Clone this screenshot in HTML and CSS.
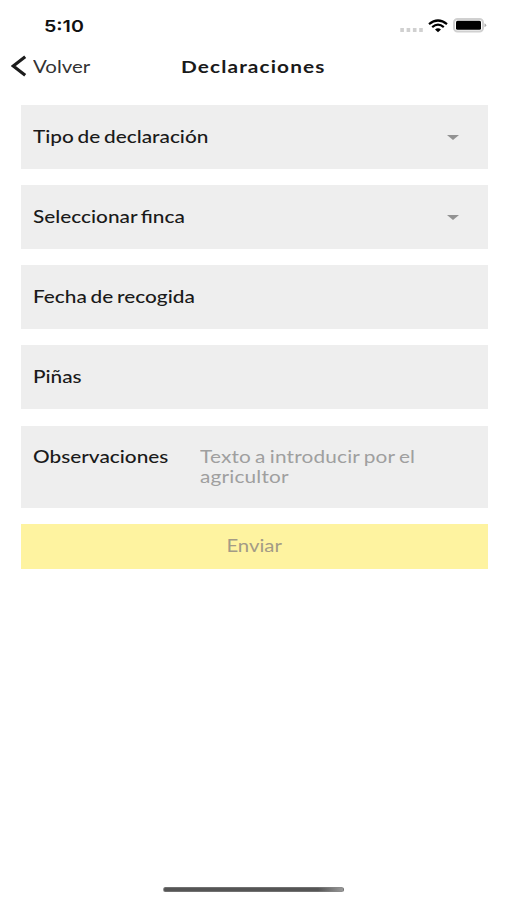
FILE: index.html
```
<!DOCTYPE html>
<html lang="es">
<head>
<meta charset="utf-8">
<title>Declaraciones</title>
<link rel="stylesheet" href="styles.css">
</head>
<body>
<header class="status">
  <span class="wide time">5:10</span>
  <div class="indicators">
    <svg class="signal" width="24" height="4" viewBox="0 0 24 4"><path d="M0.3 0h3.6v4h-3.6zM6.6 0h3.6v4h-3.6zM12.9 0h3.6v4h-3.6zM19.2 0h3.6v4h-3.6z" fill="#d0d0d0"/></svg>
    <svg class="wifi" width="20" height="14" viewBox="0 0 20 14"><g fill="none" stroke="#000" stroke-width="2.2"><path d="M1 5.2Q10-2.2 19 5.2"/><path d="M4.2 8.2Q10 3.2 15.8 8.2"/></g><path d="M7 10.6Q10 8 13 10.6L10 13.2z"/></svg>
    <svg class="battery" width="34" height="15" viewBox="0 0 34 15"><rect x="1" y="1" width="29" height="12.5" rx="3.5" fill="#fff" stroke="#d0d0d0" stroke-width="2"/><rect x="3" y="2.8" width="25" height="9" rx="1.5"/><path d="M31.5 5.2Q35 7.2 31.5 9.2z" fill="#aaa"/></svg>
  </div>
</header>
<nav class="nav">
  <a class="back"><svg width="16" height="22" viewBox="0 0 16 22"><path d="M14.2 1.8L2.2 11l12 9.2" fill="none" stroke="#1c1c1c" stroke-width="3.2"/></svg><span class="wide back-label">Volver</span></a>
  <h1 class="wide title">Declaraciones</h1>
</nav>
<main class="form">
  <div class="field"><span class="wide label">Tipo de declaración</span><i class="caret"></i></div>
  <div class="field"><span class="wide label">Seleccionar finca</span><i class="caret"></i></div>
  <div class="field"><span class="wide label">Fecha de recogida</span></div>
  <div class="field"><span class="wide label">Piñas</span></div>
  <div class="field notes"><span class="wide label">Observaciones</span><span class="wide hint">Texto a introducir por el<br>agricultor</span></div>
  <button class="send"><span class="wide send-label">Enviar</span></button>
</main>
<div class="home"></div>
</body>
</html>
```
FILE: styles.css
```
* { box-sizing: border-box; }
body {
  margin: 0;
  width: 507px;
  height: 900px;
  display: flex;
  flex-direction: column;
  background: #fff;
  color: #1a1a1a;
  font-family: Lato, sans-serif;
  font-size: 17.7px;
  line-height: 20px;
  overflow: hidden;
}
/* Lettering is set wide: stretched horizontally from its left edge. */
.wide {
  display: inline-block;
  white-space: nowrap;
  transform: scaleX(1.176);
  transform-origin: 0 50%;
}
.status {
  height: 44px;
  padding: 16px 21px 0 44px;
  display: flex;
  justify-content: space-between;
}
.time { font: 600 16.5px/20px Inter, sans-serif; color: #111; transform: scaleX(1.19); }
.indicators { display: flex; align-items: flex-start; }
.signal { margin: 12px 4px 0 0; }
.wifi { margin: 3px 5px 0 0; }
.battery { margin: 2px -1px 0 0; }
.nav { height: 60.5px; display: flex; padding-top: 11px; }
.back { display: flex; width: 181px; padding-left: 10.5px; }
.back-label { margin: 2px 0 0 6px; color: #333; transform: scaleX(1.155); }
.title { margin: 1px 0 0; font-size: 17.7px; line-height: 22px; font-weight: 700; letter-spacing: .95px; }
.form { display: flex; flex-direction: column; gap: 16.3px; padding: 0 19.5px 0 20.5px; }
.field {
  height: 64px;
  padding: 0 28.5px 0 12.5px;
  display: flex;
  align-items: center;
  justify-content: space-between;
  background: #eee;
}
.label { font-weight: 500; word-spacing: -1.3px; }
.caret { width: 0; height: 0; margin-top: 1px; border: 6px solid transparent; border-top: 5px solid #929292; border-bottom: 0; }
.notes { height: 82px; align-items: flex-start; justify-content: flex-start; padding-top: 21px; }
.notes .label { width: 166.5px; }
.hint { color: #9f9f9f; letter-spacing: .15px; word-spacing: -1.2px; }
.send { height: 45px; border: 0; padding: 0 0 1px 0; background: #fef3a0; color: #a39b86; font: 17.7px/20px Lato, sans-serif; }
.send-label { transform: scaleX(1.15); transform-origin: 50% 50%; }
.home { width: 181px; height: 5px; margin: auto auto 8px 163px; border-radius: 3px; background: linear-gradient(90deg, #555 86%, #999); border: 1px solid #8888; }
```
